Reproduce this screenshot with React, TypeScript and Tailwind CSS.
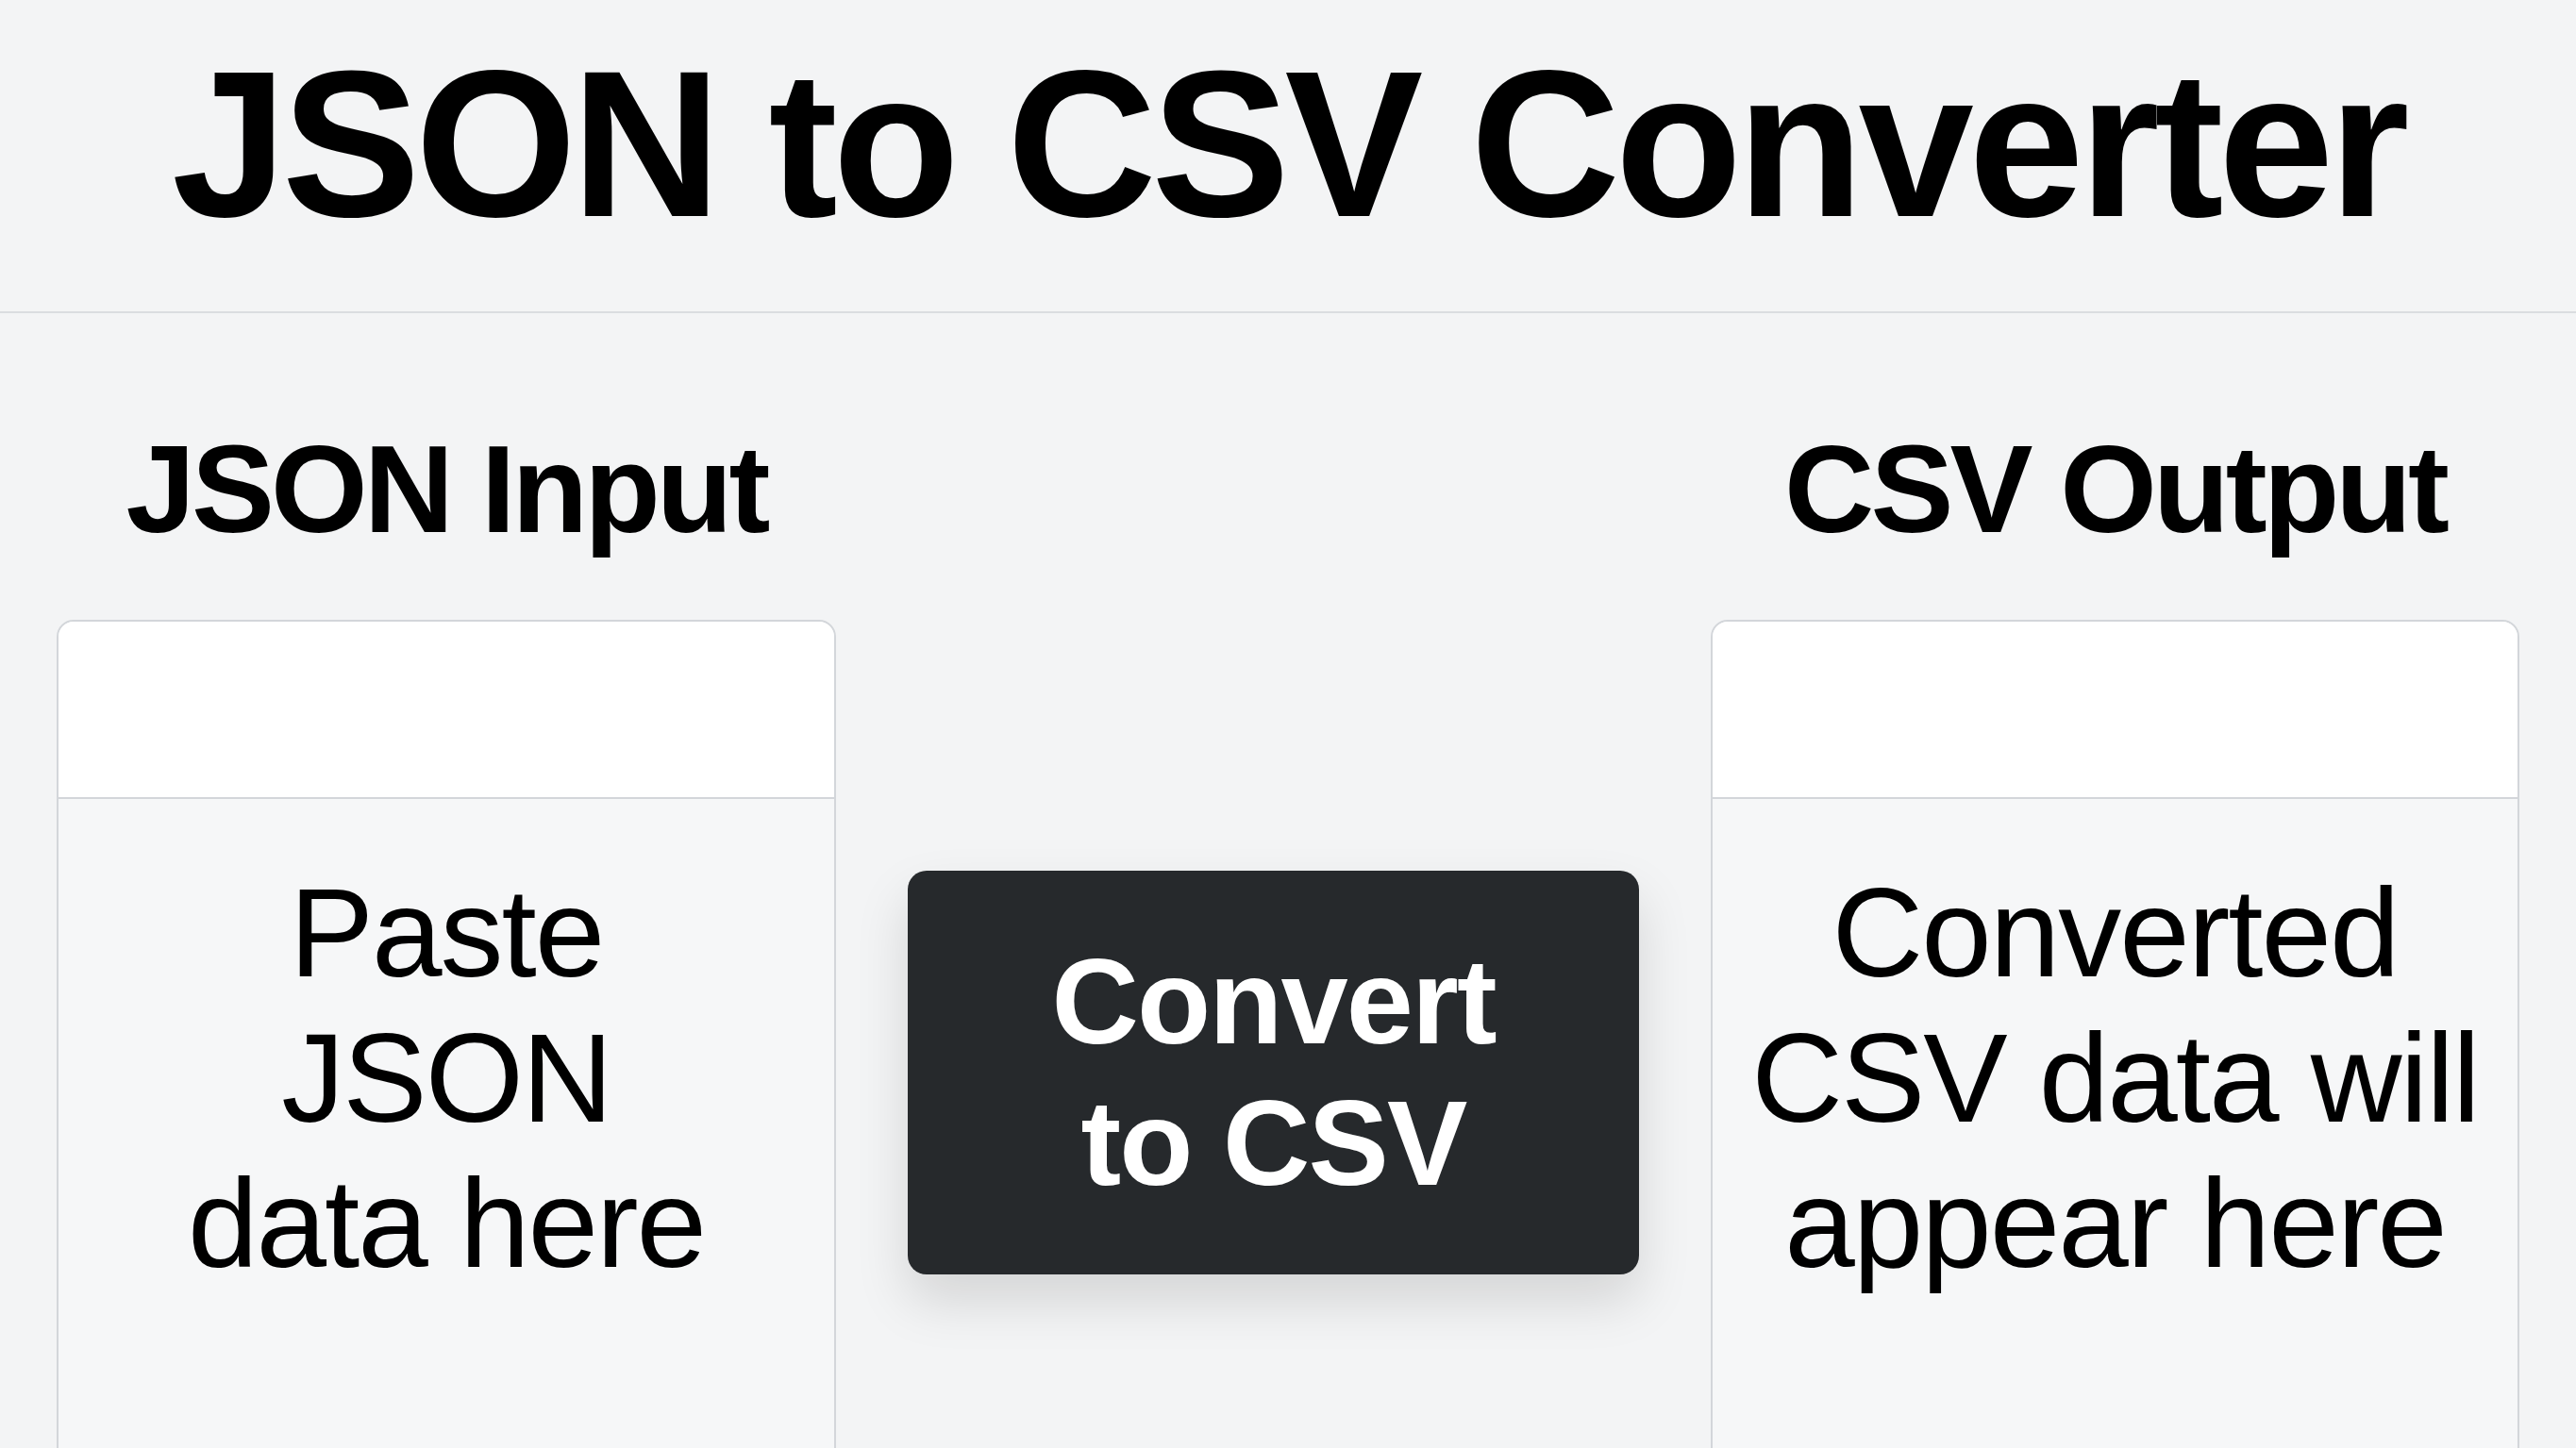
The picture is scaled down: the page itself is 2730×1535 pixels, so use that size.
import { useState } from "react";

const inputLines = ["Paste", "JSON", "data here"];
const outputLines = ["Converted", "CSV data will", "appear here"];

function Panel({ title, lines }: { title: string; lines: string[] }) {
  return (
    <div className="flex flex-col">
      {/* Panel heading */}
      <h2 className="h-[132px] text-center text-[132px] font-bold leading-none tracking-[-0.03em] text-black">
        {title}
      </h2>

      {/* Card */}
      <div className="mt-[72px] flex h-[960px] flex-col overflow-hidden rounded-t-[18px] border-2 border-[#d3d6da]">
        <div className="h-[188px] border-b-2 border-[#d3d6da] bg-white" />
        <div className="flex-1 bg-[#f6f7f8] pt-[65px] text-center text-[134px] leading-[154px] tracking-[-0.015em] text-black">
          {lines.map((line) => (
            <div key={line}>{line}</div>
          ))}
        </div>
      </div>
    </div>
  );
}

export default function App() {
  const [converting, setConverting] = useState(false);

  return (
    <div className="h-screen overflow-hidden bg-[#f3f4f5] font-['Liberation_Sans',Arial,sans-serif]">
      {/* Header */}
      <header className="h-[332px] border-b-2 border-[#dadde0] pt-[43px]">
        <h1 className="text-center text-[220px] font-bold leading-none tracking-[-0.025em] text-black">
          JSON to CSV Converter
        </h1>
      </header>

      {/* Input / action / output */}
      <main className="grid grid-cols-[826px_1fr_857px] gap-x-[76px] px-[60px] pt-[121px]">
        <Panel title="JSON Input" lines={inputLines} />

        <div className="flex flex-col">
          <button
            type="button"
            onClick={() => setConverting(!converting)}
            className="mt-[470px] flex h-[428px] flex-col items-center justify-center rounded-[20px] bg-[#26292c] text-[128px] font-bold leading-[150px] tracking-[-0.015em] text-white shadow-[0_28px_56px_rgba(0,0,0,0.13)]"
          >
            <span>Convert</span>
            <span>to CSV</span>
          </button>
        </div>

        <Panel title="CSV Output" lines={outputLines} />
      </main>
    </div>
  );
}
